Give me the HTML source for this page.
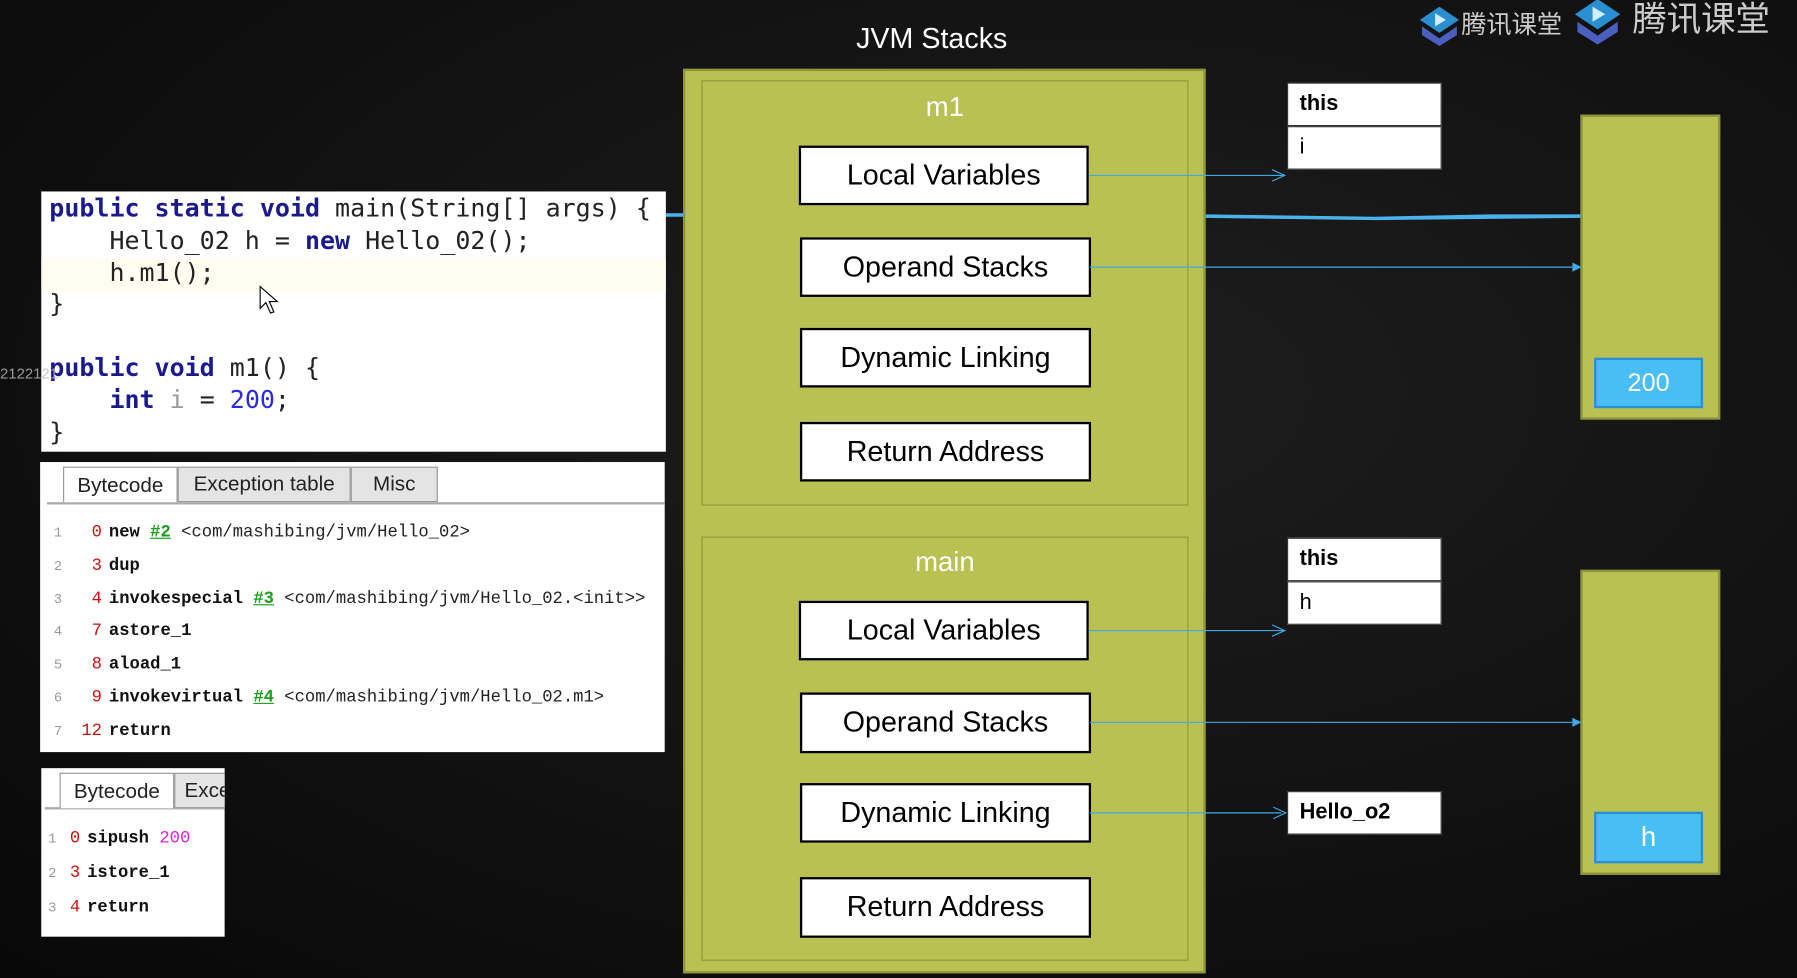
<!DOCTYPE html>
<html><head><meta charset="utf-8"><style>
*{margin:0;padding:0;box-sizing:border-box}
html,body{width:1797px;height:978px;overflow:hidden;background:#0d0d0d}
#w{position:absolute;left:0;top:0;width:1568px;height:853px;transform:scale(1.14605,1.1465);transform-origin:0 0;
background:radial-gradient(ellipse at 60% 40%,#1e1e1e 0%,#131313 50%,#080808 100%);font-family:"Liberation Sans",sans-serif}
.a{position:absolute}
.wt{color:#fff}
.g{background:#b8c152;border:2px solid #8d963a}
.in{background:#b8c152;border:1.5px solid #8f9a3a}
.box{position:absolute;background:#fff;border:2px solid #000;font-size:25px;text-align:center;color:#000;display:flex;align-items:center;justify-content:center}
.cell{position:absolute;background:#fff;border:1px solid #333;font-size:19px;font-weight:bold;padding-left:10px;display:flex;align-items:center;color:#000}
.heap{position:absolute;background:#b8c152;border:2px solid #8d963a}
.blue{position:absolute;background:#48bef5;border:2px solid #2b8fd0;color:#fff;font-size:22px;display:flex;align-items:center;justify-content:center}
pre{font-family:"DejaVu Sans Mono","Liberation Mono",monospace;font-size:21.8px;line-height:27.8px;color:#222}
.k{color:#1a1a8c;font-weight:bold}
.n{color:#2a2ae0}
.bc{font-family:"Liberation Mono",monospace;font-size:15px;line-height:28.8px;font-weight:bold;color:#111;white-space:pre}
.bc .l{color:#999;font-weight:normal;display:inline-block;width:22px;font-size:12px}
.bc .o{color:#d01010;font-weight:normal;display:inline-block;width:20px;text-align:right;margin-right:6px}
.bc .r{color:#17a017;text-decoration:underline}
.bc .c{font-weight:normal;color:#222}
.tab{position:absolute;top:4px;height:31px;border:1px solid #999;background:#e4e4e4;font-size:18px;display:flex;align-items:center;justify-content:center;color:#222}
</style></head><body><div id="w">
<div class="a wt" style="left:700px;top:20px;width:226px;text-align:center;font-size:25px">JVM Stacks</div>
<div class="a" style="left:1237px;top:4px;font-family:'Liberation Sans','Noto Sans CJK SC',sans-serif;color:#ccc;font-size:22px">
<svg width="38" height="38" style="vertical-align:middle" viewBox="0 0 40 40"><path d="M20 2 L38 14 L20 26 L2 14Z" fill="#2a8fd0"/><path d="M4 20 L20 31 L36 20 L36 28 L20 38 L4 28Z" fill="#4a5fc0"/><path d="M16 8 L26 14 L16 20Z" fill="#cfeeff"/></svg>腾讯课堂</div>
<div class="a" style="left:1372px;top:-8px;font-family:'Liberation Sans','Noto Sans CJK SC',sans-serif;color:#ccc;font-size:30px">
<svg width="44" height="44" style="vertical-align:middle" viewBox="0 0 40 40"><path d="M20 2 L38 14 L20 26 L2 14Z" fill="#2a8fd0"/><path d="M4 20 L20 31 L36 20 L36 28 L20 38 L4 28Z" fill="#4a5fc0"/><path d="M16 8 L26 14 L16 20Z" fill="#cfeeff"/></svg> 腾讯课堂</div>

<div class="a g" style="left:596px;top:60px;width:456px;height:789px"></div>
<div class="a in" style="left:612px;top:70px;width:425px;height:371px"></div>
<div class="a in" style="left:612px;top:468px;width:425px;height:370px"></div>
<div class="a wt" style="left:612px;top:80px;width:425px;text-align:center;font-size:24px">m1</div>
<div class="a wt" style="left:612px;top:477px;width:425px;text-align:center;font-size:24px">main</div>

<div class="box" style="left:697px;top:127px;width:253px;height:52px">Local Variables</div>
<div class="box" style="left:698px;top:207px;width:254px;height:52px">Operand Stacks</div>
<div class="box" style="left:698px;top:286px;width:254px;height:52px">Dynamic Linking</div>
<div class="box" style="left:698px;top:368px;width:254px;height:52px">Return Address</div>
<div class="box" style="left:697px;top:524px;width:253px;height:52px">Local Variables</div>
<div class="box" style="left:698px;top:604px;width:254px;height:53px">Operand Stacks</div>
<div class="box" style="left:698px;top:683px;width:254px;height:52px">Dynamic Linking</div>
<div class="box" style="left:698px;top:765px;width:254px;height:53px">Return Address</div>

<div class="cell" style="left:1123px;top:72px;width:135px;height:38px">this</div>
<div class="cell" style="left:1123px;top:110px;width:135px;height:38px;font-weight:normal">i</div>
<div class="cell" style="left:1123px;top:469px;width:135px;height:38px">this</div>
<div class="cell" style="left:1123px;top:507px;width:135px;height:38px;font-weight:normal">h</div>
<div class="cell" style="left:1123px;top:690px;width:135px;height:38px">Hello_o2</div>

<div class="heap" style="left:1379px;top:100px;width:122px;height:266px"></div>
<div class="blue" style="left:1391px;top:312px;width:95px;height:44px">200</div>
<div class="heap" style="left:1379px;top:497px;width:122px;height:266px"></div>
<div class="blue" style="left:1391px;top:708px;width:95px;height:45px;font-size:24px">h</div>

<svg class="a" style="left:0;top:0" width="1568" height="853">
<g stroke="#3fa9e6" stroke-width="1" fill="none">
<line x1="950" y1="153" x2="1120" y2="153"/><path d="M1110 148 L1121 153 L1110 158"/>
<line x1="951" y1="233" x2="1372" y2="233"/>
<line x1="950" y1="550" x2="1120" y2="550"/><path d="M1110 545 L1121 550 L1110 555"/>
<line x1="951" y1="630" x2="1372" y2="630"/>
<line x1="951" y1="709" x2="1118" y2="709"/><path d="M1111 704 L1122 709 L1111 714"/>
</g>
<path d="M1372 229 L1380 233 L1372 237Z" fill="#3fa9e6"/>
<path d="M1372 626 L1380 630 L1372 634Z" fill="#3fa9e6"/>
<path d="M1052 187 L1200 189 L1300 187 L1379 187 L1379 190 L1200 192 L1052 190Z" fill="#4ab3ee"/>
<path d="M581 186 L596 186 L596 189 L581 189Z" fill="#4ab3ee"/>
</svg>

<div class="a" style="left:36px;top:167px;width:545px;height:227px;background:#fff;overflow:hidden">
<div class="a" style="left:0;top:59px;width:545px;height:28px;background:#fffdf0"></div>
<pre class="a" style="left:7px;top:2px"><span class="k">public static void</span> main(String[] args) {
    Hello_02 h = <span class="k">new</span> Hello_02();
    h.m1();
}

<span class="k">public void</span> m1() {
    <span class="k">int</span> <span style="color:#999">i</span> = <span class="n">200</span>;
}</pre>
<svg class="a" style="left:190px;top:82px" width="20" height="26"><path d="M1 1 L1 20 L6 15 L10 24 L13 23 L9 14 L16 14Z" fill="#fff" stroke="#000"/></svg>
</div>
<div class="a" style="left:0;top:318px;color:#bbb;font-size:13px;opacity:.8">2122121</div>

<div class="a" style="left:35px;top:403px;width:545px;height:253px;background:#fff">
<div class="a" style="left:6px;top:35px;width:539px;height:2px;background:#aaa"></div>
<div class="tab" style="left:20px;width:100px;background:#fff;border-bottom:none">Bytecode</div>
<div class="tab" style="left:120px;width:151px">Exception table</div>
<div class="tab" style="left:271px;width:76px">Misc</div>
<div class="a bc" style="left:12px;top:48px"><span class="l">1</span><span class="o">0</span>new <span class="r">#2</span> <span class="c">&lt;com/mashibing/jvm/Hello_02&gt;</span>
<span class="l">2</span><span class="o">3</span>dup
<span class="l">3</span><span class="o">4</span>invokespecial <span class="r">#3</span> <span class="c">&lt;com/mashibing/jvm/Hello_02.&lt;init&gt;&gt;</span>
<span class="l">4</span><span class="o">7</span>astore_1
<span class="l">5</span><span class="o">8</span>aload_1
<span class="l">6</span><span class="o">9</span>invokevirtual <span class="r">#4</span> <span class="c">&lt;com/mashibing/jvm/Hello_02.m1&gt;</span>
<span class="l">7</span><span class="o">12</span>return</div>
</div>

<div class="a" style="left:36px;top:670px;width:160px;height:147px;background:#fff;overflow:hidden">
<div class="a" style="left:3px;top:34px;width:157px;height:2px;background:#aaa"></div>
<div class="tab" style="left:16px;width:100px;background:#fff;border-bottom:none">Bytecode</div>
<div class="tab" style="left:116px;width:60px;justify-content:flex-start;padding-left:8px">Exception</div>
<div class="a bc" style="left:6px;top:47px;line-height:30px"><span class="l" style="width:16px">1</span><span class="o" style="width:12px">0</span>sipush <span style="color:#e020e0;font-weight:normal">200</span>
<span class="l" style="width:16px">2</span><span class="o" style="width:12px">3</span>istore_1
<span class="l" style="width:16px">3</span><span class="o" style="width:12px">4</span>return</div>
</div>
</div></body></html>
